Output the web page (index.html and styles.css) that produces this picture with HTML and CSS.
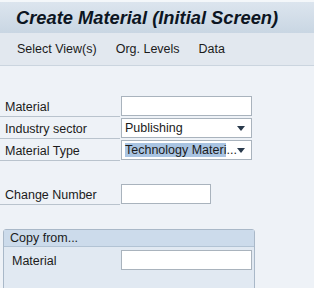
FILE: index.html
```html
<!DOCTYPE html>
<html lang="en">
<head>
  <meta charset="UTF-8">
  <title>Create Material (Initial Screen)</title>
  <link rel="stylesheet" href="styles.css">
</head>
<body>
  <header class="titlebar">
    <h1>Create Material (Initial Screen)</h1>
  </header>

  <nav class="toolbar">
    <a href="#">Select View(s)</a>
    <a href="#">Org. Levels</a>
    <a href="#">Data</a>
  </nav>

  <main class="screen">
    <div class="fields">
      <div class="row">
        <label for="material">Material</label>
        <input type="text" id="material" class="field">
      </div>
      <div class="row">
        <label for="sector">Industry sector</label>
        <div class="field select" id="sector">
          <span class="value">Publishing</span>
          <span class="arrow"></span>
        </div>
      </div>
      <div class="row">
        <label for="mtype">Material Type</label>
        <div class="field select" id="mtype">
          <span class="value"><span class="picked">Technology Materi</span>...</span>
          <span class="arrow"></span>
        </div>
      </div>
    </div>

    <div class="fields change">
      <div class="row">
        <label for="change">Change Number</label>
        <input type="text" id="change" class="field short">
      </div>
    </div>

    <section class="group">
      <div class="group-title">Copy from...</div>
      <div class="row">
        <label for="copymat">Material</label>
        <input type="text" id="copymat" class="field">
      </div>
    </section>
  </main>
</body>
</html>
```

FILE: styles.css
```css
body {
  margin: 0;
  padding: 0;
  width: 314px;
  height: 288px;
  overflow: hidden;
  font-family: "Liberation Sans", Arial, sans-serif;
  font-size: 12.5px;
  color: #1b1b1b;
  background-color: #eef2f7;
}
.titlebar {
  height: 31px;
  border-top: 2px solid #f4f7fa;
  background: linear-gradient(to bottom, #dce5ee, #c9d6e3);
  display: flex;
  align-items: center;
  padding-left: 16px;
}
.titlebar h1 {
  margin: 0;
  font-family: "Liberation Sans", Arial, sans-serif;
  font-size: 18.3px;
  font-weight: bold;
  font-style: italic;
  color: #0c1522;
}
.toolbar {
  height: 32px;
  background-color: #e2e8ef;
  border-bottom: 1px solid #cbd5df;
  display: flex;
  align-items: center;
  padding-left: 17px;
  gap: 19px;
}
.toolbar a {
  color: #1b1b1b;
  text-decoration: none;
}
.screen {
  padding: 30px 0 0 0;
}
.fields {
  display: flex;
  flex-direction: column;
  gap: 2px;
}
.row {
  display: flex;
  align-items: center;
  height: 20px;
}
.row label {
  width: 120px;
  padding-left: 5px;
  height: 20px;
  line-height: 21px;
  border-bottom: 1px solid #b9c3cd;
  box-sizing: border-box;
  margin-top: 2px;
}
.field {
  box-sizing: border-box;
  width: 131px;
  height: 20px;
  margin-left: 1px;
  border: 1px solid #a9b3bd;
  background-color: #fff;
  font-family: inherit;
  font-size: 12.5px;
  padding: 0 3px;
}
.field.short {
  width: 90px;
}
.select {
  display: flex;
  align-items: center;
  justify-content: space-between;
}
.picked {
  background-color: #a9c4e2;
}
.arrow {
  width: 0;
  height: 0;
  border-left: 4px solid transparent;
  border-right: 4px solid transparent;
  border-top: 5px solid #2a3a4c;
  margin-right: 3px;
}
.change {
  margin-top: 24px;
}
.group {
  margin: 25px 0 0 3px;
  width: 250px;
  height: 62px;
  border: 1px solid #a9b8c8;
  border-radius: 3px;
  background-color: #e1e9f2;
}
.group-title {
  height: 16px;
  line-height: 16px;
  padding-left: 6px;
  background-color: #ccdbeb;
  border-bottom: 1px solid #b2c3d4;
  margin-bottom: 3px;
}
.group .row label {
  width: 117px;
  padding-left: 8px;
  border-bottom: none;
}
.group .field {
  margin-left: 0;
}
```
